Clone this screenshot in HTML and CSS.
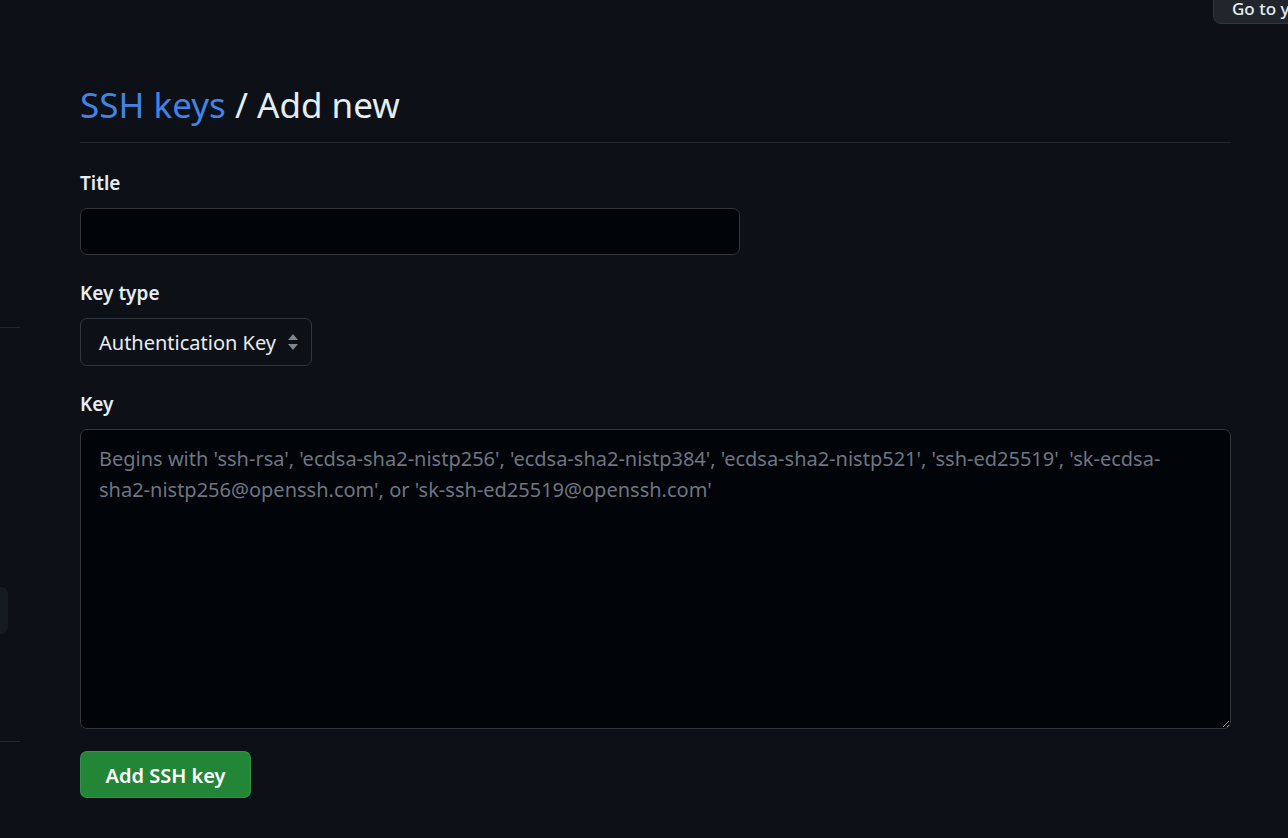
FILE: index.html
```html
<!DOCTYPE html>
<html lang="en">
<head>
<meta charset="utf-8">
<title>SSH keys / Add new</title>
<link rel="stylesheet" href="styles.css">
</head>
<body>
  <div class="topbar">
    <a class="profile-btn" href="#">Go to your personal profile</a>
  </div>
  <div class="layout">
    <aside class="sidebar">
      <div class="side-line side-line-1"></div>
      <div class="side-item"></div>
      <div class="side-line side-line-2"></div>
    </aside>
    <main class="main">
      <h1 class="page-title"><a href="#" class="crumb">SSH keys</a> / Add new</h1>
      <form class="form">
        <div class="field">
          <label class="label" for="title">Title</label>
          <input class="input title-input" id="title" type="text">
        </div>
        <div class="field">
          <label class="label" for="type">Key type</label>
          <div class="select">
            <span class="select-text">Authentication Key</span>
            <svg class="select-icon" width="12" height="18" viewBox="0 0 12 18"><path d="M6 1 L11 7 H1 Z" fill="#7d8590"/><path d="M6 17 L11 11 H1 Z" fill="#7d8590"/></svg>
          </div>
        </div>
        <div class="field">
          <label class="label" for="key">Key</label>
          <textarea class="input textarea" id="key" placeholder="Begins with 'ssh-rsa', 'ecdsa-sha2-nistp256', 'ecdsa-sha2-nistp384', 'ecdsa-sha2-nistp521', 'ssh-ed25519', 'sk-ecdsa-sha2-nistp256@openssh.com', or 'sk-ssh-ed25519@openssh.com'"></textarea>
        </div>
        <div class="actions">
          <button type="button" class="btn-primary">Add SSH key</button>
        </div>
      </form>
    </main>
  </div>
</body>
</html>
```
FILE: styles.css
```css
* { box-sizing: border-box; }
html, body {
  margin: 0;
  padding: 0;
  background: #0d1117;
  color: #e6edf3;
  font-family: "Noto Sans", "Open Sans", sans-serif;
  overflow: hidden;
  height: 838px;
}
.topbar {
  height: 0;
  display: flex;
  justify-content: flex-end;
  position: relative;
}
.profile-btn {
  position: absolute;
  left: 1213px;
  top: -20px;
  width: 200px;
  height: 44px;
  padding: 16px 18px 0;
  background: #21262d;
  border: 1px solid #30363d;
  border-radius: 8px;
  color: #e6edf3;
  text-decoration: none;
  font-size: 17px;
  font-weight: 500;
  white-space: nowrap;
  line-height: 24px;
}
.layout {
  display: flex;
}
.sidebar {
  width: 20px;
  flex: none;
  display: flex;
  flex-direction: column;
}
.side-line {
  height: 1px;
  background: #21262d;
  width: 20px;
}
.side-line-1 { margin-top: 327px; }
.side-item {
  margin-top: 259px;
  width: 8px;
  height: 47px;
  background: #161b22;
  border-radius: 0 7px 7px 0;
}
.side-line-2 { margin-top: 107px; }
.main {
  margin-left: 60px;
  width: 1151px;
  padding-top: 80px;
}
.page-title {
  margin: 0;
  font-size: 35px;
  font-weight: 400;
  line-height: 50px;
  padding-bottom: 12px;
  border-bottom: 1px solid #21262d;
  color: #e6edf3;
}
.crumb {
  color: #4184e4;
  text-decoration: none;
}
.form {
  display: flex;
  flex-direction: column;
  padding-top: 27px;
}
.field {
  display: flex;
  flex-direction: column;
  align-items: flex-start;
  margin-bottom: 25px;
}
.label {
  font-size: 19px;
  font-weight: 600;
  line-height: 26px;
  margin-bottom: 12px;
  color: #e6edf3;
}
.input {
  background: #010409;
  border: 1px solid #30363d;
  border-radius: 7px;
  color: #e6edf3;
  font-family: inherit;
  outline: none;
}
.title-input {
  width: 660px;
  height: 47px;
}
.select {
  display: flex;
  align-items: center;
  height: 48px;
  width: 232px;
  padding: 0 12px 0 18px;
  border: 1px solid #30363d;
  border-radius: 7px;
  background: #0d1117;
  justify-content: space-between;
}
.select-text {
  font-size: 20px;
  color: #e6edf3;
}
.textarea {
  width: 1151px;
  height: 300px;
  padding: 13px 24px 13px 18px;
  font-size: 20px;
  line-height: 31px;
  resize: vertical;
}
.textarea::placeholder {
  color: #6e7681;
}
.actions {
  margin-top: -3px;
  display: flex;
}
.btn-primary {
  background: #238636;
  border: 1px solid rgba(240, 246, 252, 0.1);
  color: #ffffff;
  font-family: inherit;
  font-size: 20px;
  font-weight: 600;
  height: 47px;
  width: 171px;
  border-radius: 7px;
  padding: 2px 16px 0;
}
```
